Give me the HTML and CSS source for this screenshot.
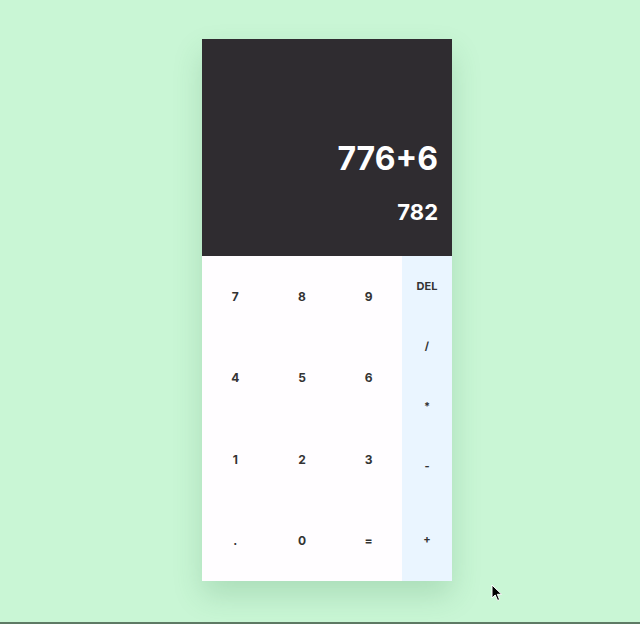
FILE: index.html
```html
<!DOCTYPE html>
<html lang="en">
<head>
    <meta charset="UTF-8">
    <meta name="viewport" content="width=device-width, initial-scale=1.0">
    <title>Calculator</title>
    <link rel="stylesheet" href="styles.css">
</head>
<body>

<div class="page">
    <div class="calculator">
        <!-- Display -->
        <div class="display">
            <div class="expression">776+6</div>
            <div class="result">782</div>
        </div>

        <!-- Keys -->
        <div class="keys">
            <div class="numbers">
                <button class="key">7</button>
                <button class="key">8</button>
                <button class="key">9</button>
                <button class="key">4</button>
                <button class="key">5</button>
                <button class="key">6</button>
                <button class="key">1</button>
                <button class="key">2</button>
                <button class="key">3</button>
                <button class="key">.</button>
                <button class="key">0</button>
                <button class="key">=</button>
            </div>
            <div class="operators">
                <button class="op">DEL</button>
                <button class="op">/</button>
                <button class="op">*</button>
                <button class="op">-</button>
                <button class="op op-last">+</button>
            </div>
        </div>
    </div>
</div>

<svg class="cursor" width="12" height="18" viewBox="0 0 12 18">
    <path d="M1 1 L1 14 L4.2 11 L6.6 16.5 L8.6 15.6 L6.3 10.3 L10.6 10.3 Z" fill="#000" stroke="#fff" stroke-width="1"/>
</svg>

</body>
</html>
```

FILE: styles.css
```css
* { box-sizing: border-box; }
body { margin: 0; background-color: #c9f6d5; font-family: Inter, "Noto Sans", sans-serif; }
.page { height: 624px; border-bottom: 2px solid #5e7a64; padding-top: 39px; display: flex; justify-content: center; }
.calculator { width: 250px; height: 542px; margin-left: 14px; display: flex; flex-direction: column; box-shadow: 0 14px 28px rgba(40, 110, 60, 0.18); }
.display { height: 217px; background-color: #2f2c30; color: #fff; display: flex; flex-direction: column; justify-content: flex-end; align-items: flex-end; padding: 0 14px 30px 0; }
.expression { font-size: 32px; font-weight: 700; line-height: 40px; }
.result { font-size: 22px; font-weight: 700; line-height: 28px; margin-top: 19px; }
.keys { flex: 1; display: flex; }
.numbers { width: 200px; background-color: #fffdff; display: grid; grid-template-columns: repeat(3, 1fr); grid-template-rows: repeat(4, 1fr); }
.operators { width: 50px; background-color: #eaf5ff; display: flex; flex-direction: column; }
button { border: none; background: transparent; font-family: inherit; font-weight: 700; font-size: 12px; color: #333; cursor: pointer; padding: 0; }
.op { height: 60px; font-size: 11px; }
.op-last { flex: 1; height: auto; }
.cursor { position: absolute; left: 491px; top: 584px; }
```
